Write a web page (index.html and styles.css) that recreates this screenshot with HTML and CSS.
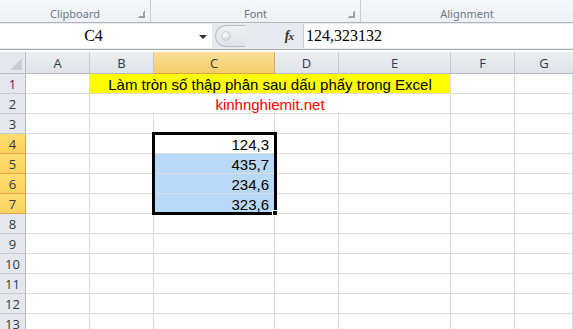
FILE: index.html
```html
<!DOCTYPE html>
<html>
<head>
<meta charset="utf-8">
<link rel="stylesheet" href="styles.css">
</head>
<body>
<div class="ribbon">
  <div class="group g-clip"><span class="glabel">Clipboard</span><span class="launch"></span></div>
  <div class="group g-font"><span class="glabel">Font</span><span class="launch"></span></div>
  <div class="group g-align"><span class="glabel">Alignment</span></div>
</div>
<div class="fbar">
  <div class="namebox"><span class="nb-text">C4</span><span class="nb-arrow"></span></div>
  <div class="fctl">
    <div class="pill"><span class="dot"></span></div>
    <span class="fx">f<span class="fxx">x</span></span>
  </div>
  <div class="finput">124,323132</div>
</div>
<div class="sheet">
  <div class="corner"><span class="tri"></span></div>
  <div class="ch">A</div><div class="ch">B</div><div class="ch sel">C</div><div class="ch">D</div><div class="ch">E</div><div class="ch">F</div><div class="ch last">G</div>

  <div class="rh">1</div><div class="c"></div><div class="c title">Làm tròn số thập phân sau dấu phẩy trong Excel</div><div class="c"></div><div class="c"></div>
  <div class="rh">2</div><div class="c"></div><div class="c site">kinhnghiemit.net</div><div class="c"></div><div class="c"></div>
  <div class="rh">3</div><div class="c"></div><div class="c"></div><div class="c"></div><div class="c"></div><div class="c"></div><div class="c"></div><div class="c"></div>
  <div class="rh sel">4</div><div class="c"></div><div class="c"></div><div class="c num">124,3</div><div class="c"></div><div class="c"></div><div class="c"></div><div class="c"></div>
  <div class="rh sel">5</div><div class="c"></div><div class="c"></div><div class="c num hl">435,7</div><div class="c"></div><div class="c"></div><div class="c"></div><div class="c"></div>
  <div class="rh sel">6</div><div class="c"></div><div class="c"></div><div class="c num hl">234,6</div><div class="c"></div><div class="c"></div><div class="c"></div><div class="c"></div>
  <div class="rh sel">7</div><div class="c"></div><div class="c"></div><div class="c num hl">323,6</div><div class="c"></div><div class="c"></div><div class="c"></div><div class="c"></div>
  <div class="rh">8</div><div class="c"></div><div class="c"></div><div class="c"></div><div class="c"></div><div class="c"></div><div class="c"></div><div class="c"></div>
  <div class="rh">9</div><div class="c"></div><div class="c"></div><div class="c"></div><div class="c"></div><div class="c"></div><div class="c"></div><div class="c"></div>
  <div class="rh">10</div><div class="c"></div><div class="c"></div><div class="c"></div><div class="c"></div><div class="c"></div><div class="c"></div><div class="c"></div>
  <div class="rh">11</div><div class="c"></div><div class="c"></div><div class="c"></div><div class="c"></div><div class="c"></div><div class="c"></div><div class="c"></div>
  <div class="rh">12</div><div class="c"></div><div class="c"></div><div class="c"></div><div class="c"></div><div class="c"></div><div class="c"></div><div class="c"></div>
  <div class="rh">13</div><div class="c"></div><div class="c"></div><div class="c"></div><div class="c"></div><div class="c"></div><div class="c"></div><div class="c"></div>

  <div class="selbox"><span class="handle"></span></div>
</div>
</body>
</html>
```

FILE: styles.css
```css
* { box-sizing: border-box; }
html, body { margin: 0; padding: 0; }
body {
  width: 573px;
  height: 329px;
  overflow: hidden;
  background: #ffffff;
  font-family: "Liberation Sans", Arial, sans-serif;
}

/* ribbon */
.ribbon {
  height: 23px;
  display: flex;
  background: linear-gradient(#f7f8fa, #eef1f5);
  border-bottom: 1px solid #b1b6bd;
}
.group {
  position: relative;
  display: flex;
  justify-content: center;
  align-items: flex-end;
  padding-bottom: 1px;
  border-right: 1px solid #c9cdd3;
}
.g-clip { width: 151px; }
.g-font { width: 210px; }
.g-align { flex: 1; border-right: none; }
.glabel {
  font-family: "Noto Sans", "Open Sans", sans-serif;
  font-size: 11px;
  line-height: 14px;
  color: #6b7788;
}
.launch {
  position: absolute;
  right: 5px;
  bottom: 4px;
  width: 7px;
  height: 7px;
  border-right: 1px solid #9aa1aa;
  border-bottom: 1px solid #9aa1aa;
}
.launch::after {
  content: "";
  position: absolute;
  left: 1px;
  top: 1px;
  width: 4px;
  height: 4px;
  border-right: 1px solid #9aa1aa;
  border-bottom: 1px solid #9aa1aa;
}

/* formula bar */
.fbar {
  display: flex;
  height: 27px;
  padding-top: 1px;
  background: #e6e9ee;
  border-bottom: 1px solid #a7adb5;
  margin-bottom: 2px;
}
.namebox {
  position: relative;
  width: 212px;
  height: 24px;
  background: #ffffff;
  display: flex;
  align-items: center;
  justify-content: center;
  padding-right: 25px;
}
.nb-text {
  font-family: "Liberation Serif", "Times New Roman", serif;
  font-size: 16px;
  color: #000;
}
.nb-arrow {
  position: absolute;
  right: 5px;
  top: 11px;
  border-left: 4px solid transparent;
  border-right: 4px solid transparent;
  border-top: 4px solid #333;
}
.fctl {
  width: 91px;
  height: 24px;
  display: flex;
  align-items: center;
  justify-content: space-between;
  padding: 0 10px 0 3px;
  background: #e6e9ee;
}
.pill {
  width: 30px;
  height: 22px;
  border: 1px solid #b9bec5;
  border-right: none;
  border-radius: 11px 0 0 11px;
  background: linear-gradient(#eef0f3, #dfe3e8);
  display: flex;
  align-items: center;
  padding-left: 5px;
}
.dot {
  width: 10px;
  height: 10px;
  border-radius: 50%;
  background: radial-gradient(circle at 40% 35%, #ffffff, #d6dae0 70%, #c2c7ce);
  border: 1px solid #cdd1d7;
}
.fx {
  font-family: "Liberation Serif", "Times New Roman", serif;
  font-style: italic;
  font-weight: bold;
  font-size: 14px;
  color: #333;
  letter-spacing: -1px;
}
.fxx { font-size: 11px; }
.finput {
  flex: 1;
  height: 24px;
  background: #ffffff;
  border-left: 1px solid #c6cbd1;
  padding-left: 2px;
  font-family: "Liberation Serif", "Times New Roman", serif;
  font-size: 16px;
  line-height: 24px;
  color: #000;
}

/* sheet grid */
.sheet {
  position: relative;
  display: grid;
  grid-template-columns: 26px 64px 64px 121px 64px 112px 64px 1fr;
  grid-template-rows: 22px repeat(13, 20px);
  background: #ffffff;
}
.corner {
  position: relative;
  background: #e4e7eb;
  border-right: 1px solid #b8bdc4;
  border-bottom: 1px solid #b8bdc4;
}
.tri {
  position: absolute;
  right: 3px;
  bottom: 3px;
  width: 0;
  height: 0;
  border-left: 12px solid transparent;
  border-bottom: 12px solid #c9ced5;
}
.ch {
  background: linear-gradient(#eceef2, #dfe3e8);
  border-right: 1px solid #c5cad1;
  border-bottom: 1px solid #b8bdc4;
  font-family: "Open Sans", "Liberation Sans", sans-serif;
  font-size: 13px;
  color: #2f3b4c;
  display: flex;
  align-items: center;
  justify-content: center;
  padding-top: 1px;
}
.ch.last { border-right: none; }
.ch.sel {
  background: linear-gradient(#fbe09a, #f6cd67);
  border-right: 1px solid #e2a548;
  border-bottom: 1px solid #e2a548;
}
.rh {
  background: #e4e7eb;
  border-right: 1px solid #b8bdc4;
  border-bottom: 1px solid #c5cad1;
  font-family: "Open Sans", "Liberation Sans", sans-serif;
  font-size: 13px;
  color: #2f3b4c;
  display: flex;
  align-items: center;
  justify-content: center;
  padding-top: 1px;
}
.rh.sel {
  background: linear-gradient(#fedd72, #fbd35d);
  border-right: 1px solid #e2a548;
  border-bottom: 1px solid #e2a548;
}
.c {
  border-right: 1px solid #dadcdd;
  border-bottom: 1px solid #dadcdd;
  font-size: 15px;
  line-height: 19px;
  color: #000;
  white-space: nowrap;
}
.title {
  grid-column: span 4;
  background: #ffff00;
  text-align: center;
  padding-top: 1px;
}
.site {
  grid-column: span 4;
  text-align: center;
  color: #ff0000;
  padding-top: 1px;
}
.num {
  text-align: right;
  padding-right: 5px;
  padding-top: 1px;
}
.hl {
  background: #b9d9fb;
}
.selbox {
  position: absolute;
  grid-column: 4 / 5;
  grid-row: 5 / 9;
  top: -2px;
  left: -2px;
  right: -2px;
  bottom: -1px;
  border: 3px solid #000;
  z-index: 2;
  pointer-events: none;
}
.handle {
  position: absolute;
  right: -4px;
  bottom: -4px;
  width: 6px;
  height: 6px;
  background: #000;
  border: 1px solid #fff;
}
```
